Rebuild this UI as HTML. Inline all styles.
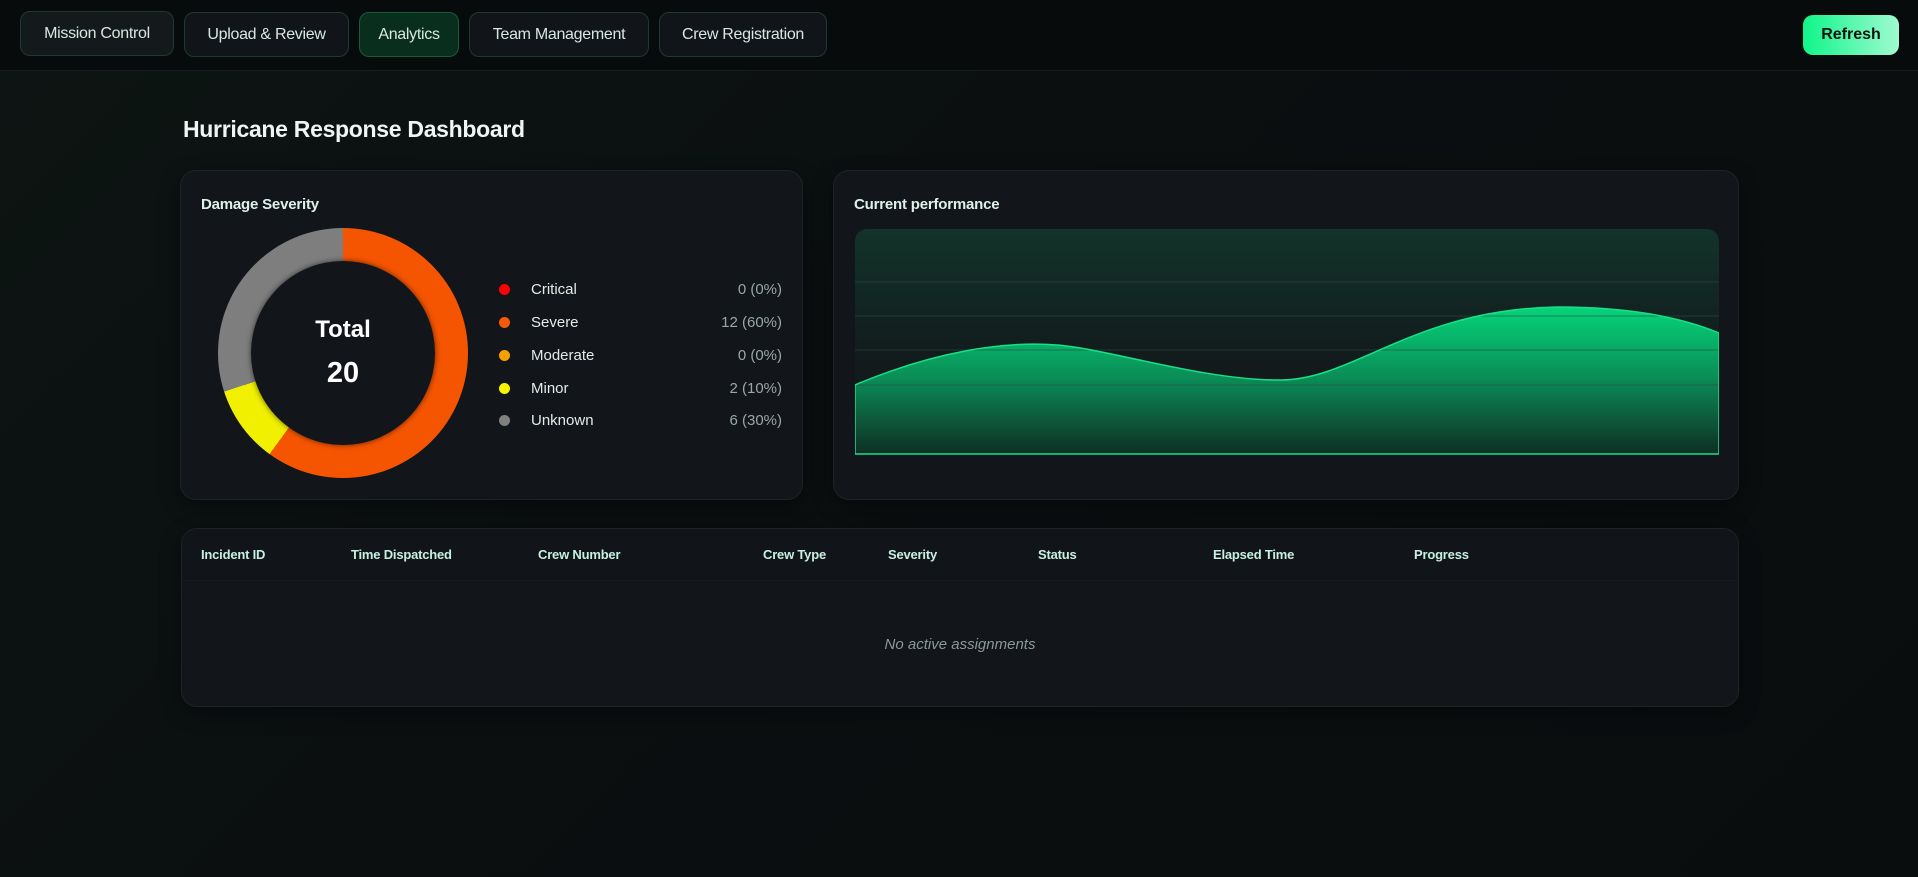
<!DOCTYPE html>
<html><head><meta charset="utf-8"><style>
*{box-sizing:border-box;margin:0;padding:0}
body{width:1918px;height:877px;overflow:hidden;background:linear-gradient(135deg,#0d1513 0%,#0b0f10 40%,#0a0d0e 100%);font-family:"Liberation Sans",sans-serif;color:#e6f4ee;position:relative}
.nav{position:absolute;left:0;top:0;width:1918px;height:71px;background:#080b0b;border-bottom:1px solid #161d1c}
.nb{position:absolute;top:12px;height:45px;border:1px solid #1d3a30;border-radius:10px;background:#11151a;color:#d6e8e0;font-size:16px;line-height:43px;text-align:center;letter-spacing:-0.3px}
.ref{position:absolute;left:1803px;top:15px;width:96px;height:40px;border-radius:10px;background:linear-gradient(90deg,#10f58a,#a0fad0);color:#0b1410;font-weight:bold;font-size:16px;line-height:40px;text-align:center}
h1{position:absolute;left:183px;top:116px;font-size:23px;font-weight:bold;color:#eef6f4;letter-spacing:-0.3px}
.card{position:absolute;background:#12151a;border:1px solid #1e2426;border-radius:16px;box-shadow:0 6px 20px rgba(0,0,0,.4)}
.ct{position:absolute;font-size:15px;font-weight:bold;color:#def2ea;letter-spacing:-0.2px}
.lg{position:absolute;left:504px;font-size:15px;width:278px;height:20px}
.lg i{position:absolute;left:-5px;top:4px;width:11px;height:11px;border-radius:50%}
.lg span{position:absolute;left:27px;top:1px;color:#e2ece8}
.lg b{position:absolute;right:0;top:1px;font-weight:normal;color:#9aa8a4}
.th{position:absolute;top:547px;font-size:13px;font-weight:bold;color:#c8f0e0;letter-spacing:-0.2px}
</style></head><body>
<div class="nav"></div>
<div class="nb" style="left:20px;width:154px;top:11px;background:#141a1c">Mission Control</div>
<div class="nb" style="left:184px;width:165px">Upload &amp; Review</div>
<div class="nb" style="left:359px;width:100px;background:#0a2e1e;border-color:#1a5a3c">Analytics</div>
<div class="nb" style="left:469px;width:180px">Team Management</div>
<div class="nb" style="left:659px;width:168px">Crew Registration</div>
<div class="ref">Refresh</div>
<h1>Hurricane Response Dashboard</h1>

<div class="card" style="left:180px;top:170px;width:623px;height:330px"></div>
<div class="ct" style="left:201px;top:196px">Damage Severity</div>
<div style="position:absolute;left:218px;top:228px;width:250px;height:250px;border-radius:50%;background:conic-gradient(#f55500 0deg 216deg,#f0f000 216deg 252deg,#7e7e7e 252deg 360deg)"></div>
<div style="position:absolute;left:251px;top:261px;width:184px;height:184px;border-radius:50%;background:#12151a;box-shadow:0 0 6px rgba(0,0,0,.6)"></div>
<div style="position:absolute;left:251px;top:316px;width:184px;text-align:center;font-weight:bold;font-size:24px;color:#fff">Total</div>
<div style="position:absolute;left:251px;top:357px;width:184px;text-align:center;font-weight:bold;font-size:29px;color:#fff">20</div>
<div class="lg" style="top:280px"><i style="background:#f00"></i><span>Critical</span><b>0 (0%)</b></div>
<div class="lg" style="top:313px"><i style="background:#f55a0a"></i><span>Severe</span><b>12 (60%)</b></div>
<div class="lg" style="top:346px"><i style="background:#f5a000"></i><span>Moderate</span><b>0 (0%)</b></div>
<div class="lg" style="top:379px"><i style="background:#f5f500"></i><span>Minor</span><b>2 (10%)</b></div>
<div class="lg" style="top:411px"><i style="background:#808080"></i><span>Unknown</span><b>6 (30%)</b></div>

<div class="card" style="left:833px;top:170px;width:906px;height:330px"></div>
<div class="ct" style="left:854px;top:196px">Current performance</div>
<div style="position:absolute;left:855px;top:229px;width:864px;height:226px;border-radius:12px 12px 0 0;overflow:hidden;background:linear-gradient(180deg,#12332a 0%,#121a1c 60%,#12161a 100%)">
<svg width="864" height="226" style="position:absolute;left:0;top:0">
<defs><linearGradient id="g" gradientUnits="userSpaceOnUse" x1="0" y1="78" x2="0" y2="225"><stop offset="0" stop-color="#05d47a"/><stop offset="0.5" stop-color="#0a8a55"/><stop offset="1" stop-color="#0f2e25"/></linearGradient></defs>
<path d="M0 156 C80 122 150 112 202 116 S 350 152 427 151 C500 150 560 80 703 78 C780 78 830 90 864 104 L864 225 L0 225 Z" fill="url(#g)"/>
<g stroke="#2c4a40" stroke-opacity="0.6" stroke-width="1"><line x1="0" y1="53" x2="864" y2="53"/><line x1="0" y1="87" x2="864" y2="87"/><line x1="0" y1="121" x2="864" y2="121"/><line x1="0" y1="156" x2="864" y2="156"/><line x1="0" y1="190" x2="864" y2="190"/></g>
<path d="M0 156 C80 122 150 112 202 116 S 350 152 427 151 C500 150 560 80 703 78 C780 78 830 90 864 104 L864 225 L0 225 Z" fill="none" stroke="#18e088" stroke-width="1.5"/>
</svg></div>

<div class="card" style="left:181px;top:528px;width:1558px;height:179px;overflow:hidden"><div style="height:52px;background:#111419;border-bottom:1px solid #161a1e"></div></div>
<div class="th" style="left:201px">Incident ID</div>
<div class="th" style="left:351px">Time Dispatched</div>
<div class="th" style="left:538px">Crew Number</div>
<div class="th" style="left:763px">Crew Type</div>
<div class="th" style="left:888px">Severity</div>
<div class="th" style="left:1038px">Status</div>
<div class="th" style="left:1213px">Elapsed Time</div>
<div class="th" style="left:1414px">Progress</div>
<div style="position:absolute;left:181px;width:1558px;top:636px;text-align:center;font-style:italic;font-size:15px;color:#8a9a94">No active assignments</div>
</body></html>
